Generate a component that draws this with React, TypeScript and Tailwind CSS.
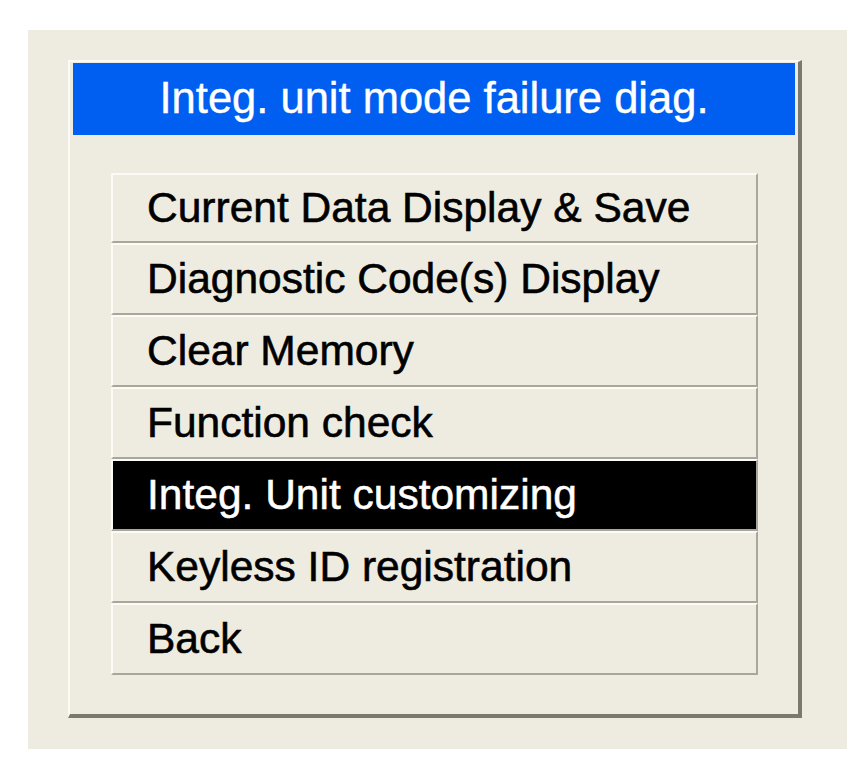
import React from "react";

const items = [
  "Current Data Display & Save",
  "Diagnostic Code(s) Display",
  "Clear Memory",
  "Function check",
  "Integ. Unit customizing",
  "Keyless ID registration",
  "Back",
];

export default function App() {
  return (
    <div
      className="w-[866px] h-[760px] bg-white pt-[30px] pl-[28px]"
      style={{ fontFamily: '"Liberation Sans", Arial, sans-serif' }}
    >
      <div className="w-[819px] h-[719px] bg-[#eeebe1] pt-[30px] pl-[40px]">
        <div className="w-[734px] h-[658px] border-t-2 border-l-2 border-t-[#fbfaf4] border-l-[#fbfaf4] border-r-[4px] border-b-[4px] border-r-[#7b796f] border-b-[#7b796f] pt-px pl-[3px]">
          <div className="w-[722px] h-[72px] bg-[#005ff0] flex items-center justify-center text-white text-[43.5px] leading-none [-webkit-text-stroke:0.4px_white]">
            Integ. unit mode failure diag.
          </div>
          <div className="ml-[38px] mt-[38px] w-[647px] flex flex-col">
            {items.map((t, i) => {
              const sel = i === 4;
              return (
                <div
                  key={t}
                  className={
                    (i === 0 ? "h-[70px] " : "h-[72px] ") +
                    "flex items-center pl-[34px] border-t-2 border-l-2 border-t-[#fbfaf4] border-l-[#fbfaf4] border-b-2 border-r-2 border-b-[#a9a69b] border-r-[#a9a69b] text-[42.5px] leading-none " +
                    (sel
                      ? "bg-black text-white [-webkit-text-stroke:0.5px_white]"
                      : "bg-[#eeebe1] text-black [-webkit-text-stroke:0.6px_black]")
                  }
                >
                  {t}
                </div>
              );
            })}
          </div>
        </div>
      </div>
    </div>
  );
}
